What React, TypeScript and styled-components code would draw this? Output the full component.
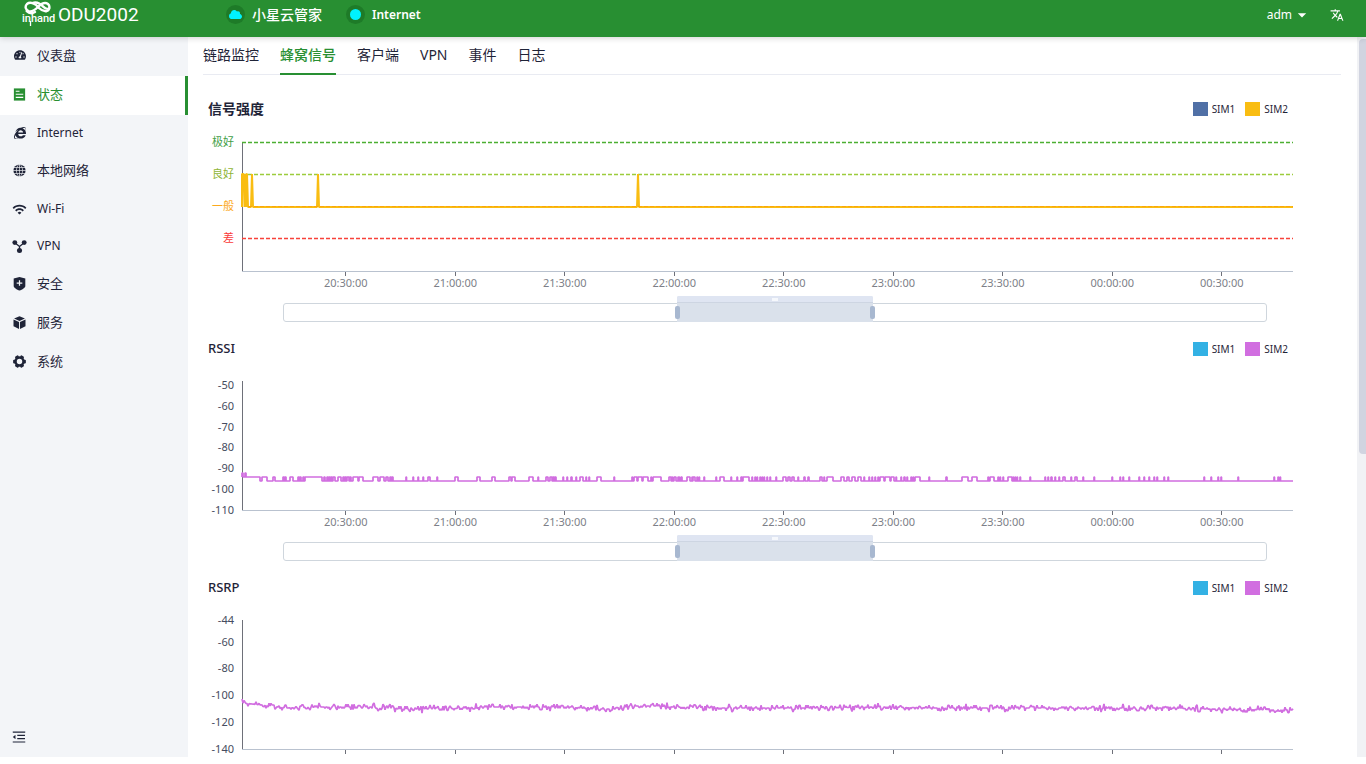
import React, { useMemo, useState } from "react";
import styled, { createGlobalStyle, css } from "styled-components";
import { FaCloud, FaInternetExplorer, FaTachometerAlt } from "react-icons/fa";
import { MdTranslate, MdWifi, MdArrowDropDown } from "react-icons/md";
import { AiOutlineMenuFold } from "react-icons/ai";

const color = {
  brand: "#288f32",
  badge: "#1e7b28",
  cyan: "#00f2fe",
  ink: "#1f2438",
  side: "#f3f5f8",
  rule: "#e9ebf2",
  axis: "#6e7079",
  grid: "#b9c2cf",
  pink: "#d16ee0",
  blue: "#33b1e4",
  yellow: "#f9bd12",
  navy: "#5070a6",
};

const GlobalStyle = createGlobalStyle`
  *, *::before, *::after { box-sizing: border-box; }
  body {
    margin: 0;
    color: ${color.ink};
    background: #fff;
    font: 13px/20px "Noto Sans", "Noto Sans CJK SC", sans-serif;
  }
  button { font: inherit; color: inherit; background: none; border: 0; padding: 0; cursor: pointer; }
  a { color: inherit; text-decoration: none; }
`;

const Page = styled.div`
  display: grid;
  grid-template: 37px minmax(0, 1fr) / 188px minmax(0, 1fr) 9px;
  height: 100vh;
  padding-bottom: 7px;
`;

const Header = styled.header`
  grid-column: 1 / -1;
  z-index: 1;
  display: flex;
  align-items: center;
  height: 37px;
  padding: 0 22px 8px 20px;
  color: #fff;
  background: ${color.brand};
  box-shadow: 0 1px 6px rgba(0, 0, 0, 0.18);
`;

const Brand = styled.a`
  display: flex;
  align-items: center;
  gap: 2px;
  width: 206px;
  font: 19px/28px Roboto, sans-serif;
`;

const Status = styled.div<{ $latin?: boolean }>`
  display: flex;
  align-items: center;
  gap: 7px;
  margin-right: 24px;
  font-size: ${(p) => (p.$latin ? 12 : 14)}px;
  font-weight: ${(p) => (p.$latin ? 600 : 500)};
`;

const Badge = styled.span`
  display: grid;
  place-items: center;
  width: 19px;
  height: 19px;
  border-radius: 50%;
  color: ${color.cyan};
  background: ${color.badge};
`;

const Dot = styled.i`
  width: 11px;
  height: 11px;
  border-radius: 50%;
  background: currentColor;
`;

const HeaderButton = styled.button`
  display: flex;
  align-items: center;
  font-size: 12px;
`;

const HeaderTools = styled.div`
  display: flex;
  align-items: center;
  gap: 18px;
  margin-left: auto;
`;

const Sidebar = styled.aside`
  display: flex;
  flex-direction: column;
  justify-content: space-between;
  background: ${color.side};
`;

const Menu = styled.nav`
  display: flex;
  flex-direction: column;
  height: 345px;
`;

const MenuItem = styled.a<{ $active?: boolean; $latin?: boolean }>`
  flex: 1;
  display: flex;
  align-items: center;
  gap: 10px;
  padding: 0 0 ${(p) => (p.$latin ? 1 : 3)}px 12px;
  font-size: ${(p) => (p.$latin ? 12 : 13)}px;
  border-right: 3px solid transparent;
  ${(p) =>
    p.$active &&
    css`
      color: ${color.brand};
      background: #fff;
      border-color: ${color.brand};
    `}
`;

const MenuIcon = styled.span`
  display: grid;
  place-items: center;
  width: 15px;
  height: 15px;
`;

const Collapse = styled.button`
  display: flex;
  padding: 12px 11px;
`;

const Main = styled.main`
  overflow-y: auto;
  scrollbar-width: none;
  padding: 0 16px 0 15px;
`;

const Rail = styled.div`
  padding: 2px 0 2px 2px;
  background: #f1f2f5;
`;

const Thumb = styled.div`
  height: 58%;
  border-radius: 4px 0 0 4px;
  background: #d1d4e0;
`;

const Tabs = styled.nav`
  display: flex;
  gap: 21px;
  height: 38px;
  border-bottom: 1px solid ${color.rule};
`;

const Tab = styled.a<{ $active?: boolean }>`
  height: 38px;
  font-size: 14px;
  line-height: 36px;
  border-bottom: 2px solid ${(p) => (p.$active ? color.brand : "transparent")};
  color: ${(p) => (p.$active ? color.brand : "inherit")};
  font-weight: ${(p) => (p.$active ? 500 : 400)};
`;

const Charts = styled.div`
  padding: 23px 48px 0 5px;
`;

const ChartSection = styled.section`
  display: flex;
  flex-direction: column;
  margin-bottom: 16px;
`;

const ChartHead = styled.div`
  display: flex;
  align-items: center;
  justify-content: space-between;
  margin-bottom: 15px;
  padding-right: 5px;
`;

const Title = styled.h2<{ $latin?: boolean }>`
  margin: 0;
  font-size: ${(p) => (p.$latin ? 13 : 14)}px;
  line-height: ${(p) => (p.$latin ? 21 : 22)}px;
  font-weight: ${(p) => (p.$latin ? 500 : 700)};
`;

const Legend = styled.div`
  display: flex;
  gap: 10px;
`;

const LegendItem = styled.button`
  display: flex;
  align-items: center;
  gap: 4px;
  font-size: 10px;
  line-height: 14px;
`;

const Swatch = styled.i<{ $color: string }>`
  width: 15px;
  height: 14px;
  background: ${(p) => p.$color};
`;

const Plot = styled.div`
  display: grid;
  grid-template-columns: 26px minmax(0, 1fr);
  column-gap: 8px;
`;

const YLabels = styled.div<{ $lead: number }>`
  display: flex;
  flex-direction: column;
  height: 129px;
  padding-top: ${(p) => p.$lead}px;
  font-size: 11px;
  line-height: 14px;
  text-align: right;
`;

const YLabel = styled.span<{ $span: number; $color?: string }>`
  flex: ${(p) => p.$span} 1 0;
  min-height: 0;
  white-space: nowrap;
  color: ${(p) => p.$color ?? "#464c60"};
`;

const Canvas = styled.svg`
  display: block;
  width: 100%;
  height: 130px;
  margin-top: 7px;
  overflow: visible;
  path { vector-effect: non-scaling-stroke; fill: none; }
`;

const XLabels = styled.div`
  grid-column: 2;
  display: grid;
  grid-template-columns: 98fr repeat(9, 219fr) 33fr;
  height: 24px;
  font-size: 11px;
  line-height: 14px;
  color: #7d7f88;
`;

const XLabel = styled.span`
  display: flex;
  flex-direction: column;
  align-items: center;
  &:first-child { grid-column: 2; }
  &::before {
    content: "";
    width: 1px;
    height: 4px;
    background: ${color.axis};
  }
`;

const Zoom = styled.div`
  display: grid;
  grid-template-rows: 7px 19px;
  margin: 0 26px 0 75px;
`;

const ZoomTrack = styled.div`
  grid-area: 2 / 1;
  border: 1px solid #cfd6dd;
  border-radius: 3px;
`;

const ZoomWindow = styled.div`
  grid-area: 1 / 1 / 3 / 2;
  display: grid;
`;

const ZoomFill = styled.div`
  grid-column: 2;
  display: flex;
  flex-direction: column;
  border-radius: 2px 2px 0 0;
  background: #dae1eb;
  overflow: hidden;
`;

const Grip = styled.div`
  display: flex;
  justify-content: center;
  align-items: center;
  height: 7px;
  background: #dfe5f2;
  border-bottom: 1px solid #cdd5e2;
  i {
    width: 6px;
    height: 3px;
    background: #f6f8fc;
  }
`;

const ZoomHandle = styled.input`
  grid-area: 2 / 1;
  appearance: none;
  width: 100%;
  height: 19px;
  margin: 0;
  background: none;
  pointer-events: none;
  &::-webkit-slider-thumb {
    appearance: none;
    width: 5px;
    height: 13px;
    border-radius: 2px;
    background: #a8b8d0;
    pointer-events: auto;
    cursor: ew-resize;
  }
`;

/* Icons */

const icon = { width: 15, height: 15, viewBox: "0 0 16 16", fill: "currentColor", "aria-hidden": true } as const;

const LogoMark = () => (
  <svg width="36" height="29" viewBox="0 0 36 29" aria-label="inhand">
    <g fill="none" stroke="#fff" strokeLinecap="round">
      <path d="M19 8C15 3 10 1.500 7 4C4.600 6.500 5.500 10 8.600 11.200C12.500 12.300 15.500 9.500 18 7C21 4 25 2 28 4C30.400 6 29.600 10.500 26.500 11.200C23 11.700 21 10 19 8" strokeWidth="2.400" />
      <path d="M12.500 3C16.500 1.500 20 3.200 23.500 6.800C25.500 8.800 27.500 9.200 29 8.500M6.800 11.200C8.800 13.300 12 13.800 15 12" strokeWidth="2.400" />
    </g>
    <text x="2" y="22" fill="#fff" fontFamily="Roboto, sans-serif" fontSize="11" fontWeight="500">inhand</text>
    <path d="M10.500 21V26" stroke="#fff" strokeWidth="1.300" />
  </svg>
);

const StatusIcon = () => (
  <svg {...icon}>
    <path d="M2 1.500h12v13H2z" />
    <path d="M4 4.500h4M4 7.700h8M4 11h8" stroke="#fff" strokeWidth="1.200" />
  </svg>
);

const GlobeIcon = () => (
  <svg {...icon}>
    <circle cx="8" cy="8" r="6.500" />
    <path d="M1 8h14M2 4.800h12M2 11.200h12M8 1v14M8 1C3.600 4.500 3.600 11.500 8 15M8 1c4.400 3.500 4.400 10.500 0 14" fill="none" stroke={color.side} strokeWidth="0.700" />
  </svg>
);

const NodesIcon = () => (
  <svg {...icon}>
    <path d="M3 4l5 4 5-4M8 8v5" fill="none" stroke="currentColor" strokeWidth="1.400" />
    <circle cx="3" cy="3.800" r="2.600" />
    <circle cx="13" cy="3.800" r="2.600" />
    <circle cx="8" cy="12.300" r="2.700" />
  </svg>
);

const ShieldIcon = () => (
  <svg {...icon}>
    <path d="M8 1l6.200 1.600v8c0 2-3.300 3.800-6.200 4.900-2.900-1.100-6.200-2.900-6.200-4.900v-8z" />
    <path d="M8 4.500v6M5 7.500h6" stroke={color.side} strokeWidth="1.300" />
  </svg>
);

const CubeIcon = () => (
  <svg {...icon}>
    <path d="M8 1.400l5.800 2.300L8 6.300 2.200 3.700zM1.600 4.800l5.900 2.600v7.400l-5.900-2.700zM14.400 4.800L8.500 7.400v7.400l5.900-2.700z" />
  </svg>
);

const GearIcon = () => (
  <svg {...icon}>
    <circle cx="8" cy="8" r="4.200" fill="none" stroke="currentColor" strokeWidth="2.600" />
    {[30, 90, 150, 210, 270, 330].map((a) => (
      <rect key={a} x="6" y="1.200" width="4" height="3" rx="1" transform={`rotate(${a} 8 8)`} />
    ))}
  </svg>
);

/* Series */

const PLOT_WIDTH = 1051;
const PLOT_HEIGHT = 129;

// Spans during which RSSI reads -94 dBm; it reads -96 dBm in between.
const rssiHigh =
  "0-18 20-25 31-33 41-42 43-44 48-51 56-57 58-59 61-62 63-80 82-83 85-86 87-88 89-90 91-93 96-99 101-102 103-104 105-107 108-109 111-116 117-121 131-136 138-142 144-146 148-149 150-151 164 171 176 181 186-188 195 213-216 235-238 250-253 267-269 270-273 287-291 296 304-306 308-310 311-312 313-314 321 325 329-330 " +
  "334 338-341 344 347 355-359 372 390 392-395 396-400 401-406 409 411-419 427-429 430 432-434 436 437 439-440 445-448 450 451-453 455 457 462 474 478-482 489 495 499-500 501-507 510 513 515 518 520 522 525 528 534 541-544 546-548 550-552 556 562-563 566-567 578-580 582 585-591 599-602 605-607 610-613 616-619 622 627 630 633 636 638-642 643-648 649-652 654 659 662-663 665 669 671 673-678 " +
  "687 704-705 720-726 730-735 746 748-752 756 758 761 766-770 771 773 775 778 788 803 806 809-810 813 817 821-823 829 833-835 841 852 870 878 881 887 897 902 907 912 915 922 926 962 969 976 979 996 1032 1036 1038";

function rssiPath() {
  const high = 96;
  const low = 100;
  let d = `M0 ${high}V92H1V${high}H3V92H4V${high}`;
  for (const part of rssiHigh.split(" ")) {
    const [a, b] = part.split("-").map(Number);
    d += `${a > 0 ? `H${a}V${high}` : ""}H${b ?? a + 0.5}V${low}`;
  }
  return `${d}H${PLOT_WIDTH}`;
}

const rsrpTrend: [number, number][] = [
  [0, 83], [20, 85], [45, 88], [75, 87], [150, 87], [156, 89], [205, 89], [240, 87], [330, 87],
  [350, 89], [375, 89], [390, 86], [415, 86], [430, 87], [480, 88], [560, 88], [650, 87], [690, 88], [860, 88],
  [920, 88], [960, 89], [1051, 90],
];

function rsrpPath() {
  let seed = 20;
  let k = 0;
  let d = "";
  for (let x = 0; x <= PLOT_WIDTH; x += 1) {
    while (rsrpTrend[k + 1] && rsrpTrend[k + 1][0] < x) k += 1;
    const [x0, y0] = rsrpTrend[k];
    const [x1, y1] = rsrpTrend[k + 1];
    seed = (seed * 16807) % 2147483647;
    const r = seed / 2147483647 - 0.5;
    const y = y0 + ((y1 - y0) * (x - x0)) / (x1 - x0) + Math.round(r * 2 + r * r * r * 13) * 1.345;
    d += `${x ? "L" : "M"}${x} ${y.toFixed(1)}`;
  }
  return d;
}

const strengthPath =
  "M0 65V32H1.500L2.500 65L3 32L4 65L4.500 32H5L6 65H9L10 32L11 65H75L76 32L77 65H395L396 32L397 65H1051";

type Tick = { text: string; span: number; color?: string };
type ChartSpec = {
  title: string;
  latin?: boolean;
  swatches: [string, string];
  lead: number;
  ticks: Tick[];
  guides?: [number, string][];
  path: string;
};

const numericTicks = (values: number[]): Tick[] =>
  values.map((v, i) => ({ text: String(v), span: i + 1 < values.length ? v - values[i + 1] : 0 }));

const times = ["20:30:00", "21:00:00", "21:30:00", "22:00:00", "22:30:00", "23:00:00", "23:30:00", "00:00:00", "00:30:00"];

function Chart({ title, latin, swatches, lead, ticks, guides = [], path }: ChartSpec) {
  const [range, setRange] = useState<[number, number]>([40, 60]);
  const [from, to] = range;
  return (
    <ChartSection>
      <ChartHead>
        <Title $latin={latin}>{title}</Title>
        <Legend>
          {swatches.map((c, i) => (
            <LegendItem key={c} type="button">
              <Swatch $color={c} />
              SIM{i + 1}
            </LegendItem>
          ))}
        </Legend>
      </ChartHead>
      <Plot>
        <YLabels $lead={lead}>
          {ticks.map((t) => (
            <YLabel key={t.text} $span={t.span} $color={t.color}>{t.text}</YLabel>
          ))}
        </YLabels>
        <Canvas viewBox={`0 0 ${PLOT_WIDTH} ${PLOT_HEIGHT + 1}`} preserveAspectRatio="none" role="img" aria-label={title}>
          <path d="M0.500 0V129.500" stroke={color.axis} />
          <path d={`M0 129.500H${PLOT_WIDTH}`} stroke={color.grid} />
          {guides.map(([y, c]) => (
            <path key={y} d={`M0 ${y}H${PLOT_WIDTH}`} stroke={c} strokeDasharray="4 2" strokeWidth="1.300" />
          ))}
          <path d={path} stroke={swatches[1]} strokeWidth={guides.length ? 2 : 1.7} strokeLinejoin="bevel" />
          {guides.length > 0 && <path d={`M6 64.500H${PLOT_WIDTH}`} stroke="#fca60b" strokeDasharray="4 2" />}
        </Canvas>
        <XLabels>
          {times.map((t) => (
            <XLabel key={t}>{t}</XLabel>
          ))}
        </XLabels>
      </Plot>
      <Zoom>
        <ZoomTrack />
        <ZoomWindow style={{ gridTemplateColumns: `${from}fr ${to - from}fr ${100 - to}fr` }}>
          <ZoomFill>
            <Grip><i /></Grip>
          </ZoomFill>
        </ZoomWindow>
        <ZoomHandle
          type="range"
          aria-label={`${title} start`}
          value={from}
          onChange={(e) => setRange([Math.min(+e.target.value, to), to])}
        />
        <ZoomHandle
          type="range"
          aria-label={`${title} end`}
          value={to}
          onChange={(e) => setRange([from, Math.max(+e.target.value, from)])}
        />
      </Zoom>
    </ChartSection>
  );
}

const menu = [
  { text: "仪表盘", icon: <FaTachometerAlt size={12} /> },
  { text: "状态", icon: <StatusIcon />, active: true },
  { text: "Internet", icon: <FaInternetExplorer size={12} />, latin: true },
  { text: "本地网络", icon: <GlobeIcon /> },
  { text: "Wi-Fi", icon: <MdWifi size={15} />, latin: true },
  { text: "VPN", icon: <NodesIcon />, latin: true },
  { text: "安全", icon: <ShieldIcon /> },
  { text: "服务", icon: <CubeIcon /> },
  { text: "系统", icon: <GearIcon /> },
];

const tabs = ["链路监控", "蜂窝信号", "客户端", "VPN", "事件", "日志"];

export default function App() {
  const charts = useMemo<ChartSpec[]>(
    () => [
      {
        title: "信号强度",
        swatches: [color.navy, color.yellow],
        lead: 0,
        ticks: [
          { text: "极好", span: 32, color: "#43a047" },
          { text: "良好", span: 32, color: "#8fb536" },
          { text: "一般", span: 32, color: "#fba91e" },
          { text: "差", span: 33, color: "#fb3a3a" },
        ],
        guides: [[0.5, "#4caf32"], [32.5, "#9ccc3c"], [96.5, "#f8423a"]],
        path: strengthPath,
      },
      {
        title: "RSSI",
        latin: true,
        swatches: [color.blue, color.pink],
        lead: 4,
        ticks: numericTicks([-50, -60, -70, -80, -90, -100, -110]),
        path: rssiPath(),
      },
      {
        title: "RSRP",
        latin: true,
        swatches: [color.blue, color.pink],
        lead: 0,
        ticks: numericTicks([-44, -60, -80, -100, -120, -140]),
        path: rsrpPath(),
      },
    ],
    [],
  );

  return (
    <>
      <GlobalStyle />
      <Page>
        <Header>
          <Brand href="#">
            <LogoMark />
            ODU2002
          </Brand>
          <Status>
            <Badge><FaCloud size={13} /></Badge>
            小星云管家
          </Status>
          <Status $latin>
            <Badge><Dot /></Badge>
            Internet
          </Status>
          <HeaderTools>
            <HeaderButton type="button">
              adm
              <MdArrowDropDown size={20} />
            </HeaderButton>
            <HeaderButton type="button" aria-label="Language">
              <MdTranslate size={14} />
            </HeaderButton>
          </HeaderTools>
        </Header>
        <Sidebar>
          <Menu>
            {menu.map((m) => (
              <MenuItem key={m.text} href="#" $active={m.active} $latin={m.latin}>
                <MenuIcon>{m.icon}</MenuIcon>
                {m.text}
              </MenuItem>
            ))}
          </Menu>
          <Collapse type="button" aria-label="Collapse menu">
            <AiOutlineMenuFold size={16} />
          </Collapse>
        </Sidebar>
        <Main>
          <Tabs>
            {tabs.map((t, i) => (
              <Tab key={t} href="#" $active={i === 1}>{t}</Tab>
            ))}
          </Tabs>
          <Charts>
            {charts.map((c) => (
              <Chart key={c.title} {...c} />
            ))}
          </Charts>
        </Main>
        <Rail><Thumb /></Rail>
      </Page>
    </>
  );
}
